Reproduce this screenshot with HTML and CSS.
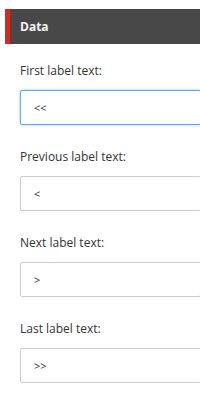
FILE: index.html
```html
<!DOCTYPE html>
<html lang="en">
<head>
  <meta charset="UTF-8">
  <title>Data</title>
  <link rel="stylesheet" href="styles.css">
</head>
<body>
<div class="panel">
  <div class="panel-head">Data</div>

  <div class="field">
    <label>First label text:</label>
    <input type="text" class="focused" value="&lt;&lt;">
  </div>
  <div class="field">
    <label>Previous label text:</label>
    <input type="text" value="&lt;">
  </div>
  <div class="field">
    <label>Next label text:</label>
    <input type="text" value="&gt;">
  </div>
  <div class="field">
    <label>Last label text:</label>
    <input type="text" value="&gt;&gt;">
  </div>
</div>
</body>
</html>
```

FILE: styles.css
```css
body { margin: 0; background: #fff; font-family: "Open Sans", Arial, sans-serif; overflow: hidden; }
.panel { padding-top: 9px; }
.panel-head { margin-left: 5px; height: 35px; line-height: 35px; background: #484848; border-left: 5px solid #d62a20; padding-left: 10px; color: #f2f2f2; font-size: 12px; font-weight: 700; }
.field { padding: 19px 0 0 20px; display: flex; flex-direction: column; }
.field + .field { padding-top: 24px; }
.field label { font-size: 12px; color: #333; line-height: 16px; margin-bottom: 11px; }
.field input { box-sizing: border-box; width: 181px; height: 35px; border: 1px solid #ccc; border-radius: 2px; padding: 0 13px; font-family: "Open Sans", Arial, sans-serif; font-size: 11px; color: #333; outline: none; }
.field input.focused { border-color: #66a6e8; box-shadow: 0 0 3px rgba(102, 166, 232, 0.6); }
```
